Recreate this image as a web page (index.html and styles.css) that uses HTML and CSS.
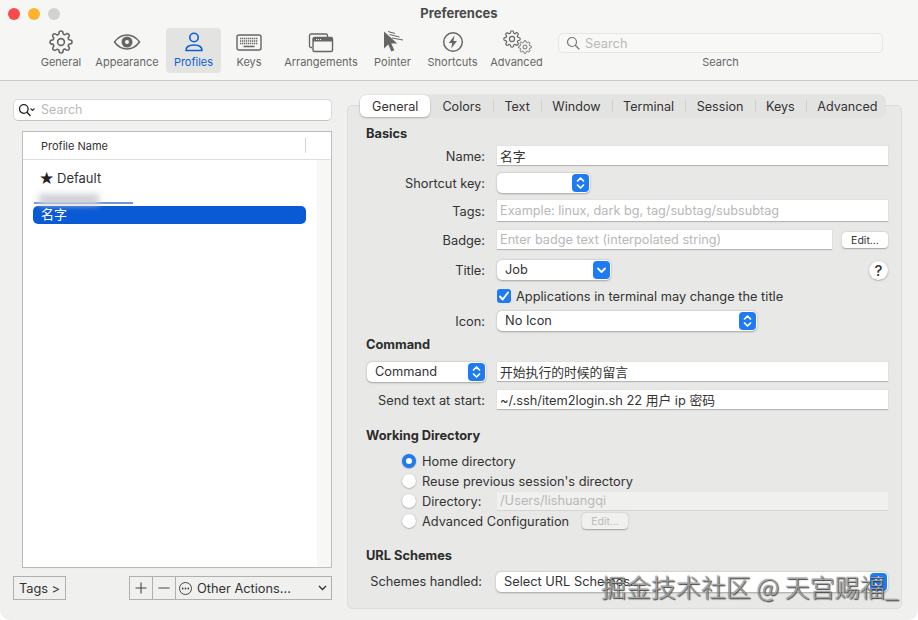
FILE: index.html
```html
<!DOCTYPE html>
<html lang="en">
<head>
<meta charset="utf-8">
<title>Preferences</title>
<link rel="stylesheet" href="styles.css">
</head>
<body>
<svg class="defs" width="0" height="0" aria-hidden="true">
  <symbol id="gear" viewBox="0 0 24 24">
    <circle cx="12" cy="12" r="3.4" fill="none" stroke="currentColor" stroke-width="1.6"/>
    <path fill="none" stroke="currentColor" stroke-width="1.6" d="M19.4 15a1.65 1.65 0 0 0 .33 1.82l.06.06a2 2 0 0 1 0 2.83 2 2 0 0 1-2.83 0l-.06-.06a1.65 1.65 0 0 0-1.82-.33 1.65 1.65 0 0 0-1 1.51V21a2 2 0 0 1-2 2 2 2 0 0 1-2-2v-.09A1.65 1.65 0 0 0 9 19.4a1.65 1.65 0 0 0-1.82.33l-.06.06a2 2 0 0 1-2.83 0 2 2 0 0 1 0-2.83l.06-.06a1.65 1.65 0 0 0 .33-1.82 1.65 1.65 0 0 0-1.51-1H3a2 2 0 0 1-2-2 2 2 0 0 1 2-2h.09A1.65 1.65 0 0 0 4.6 9a1.65 1.65 0 0 0-.33-1.82l-.06-.06a2 2 0 0 1 0-2.83 2 2 0 0 1 2.83 0l.06.06a1.65 1.65 0 0 0 1.82.33H9a1.65 1.65 0 0 0 1-1.51V3a2 2 0 0 1 2-2 2 2 0 0 1 2 2v.09a1.65 1.65 0 0 0 1 1.51 1.65 1.65 0 0 0 1.82-.33l.06-.06a2 2 0 0 1 2.83 0 2 2 0 0 1 0 2.83l-.06.06a1.65 1.65 0 0 0-.33 1.82V9a1.65 1.65 0 0 0 1.51 1H21a2 2 0 0 1 2 2 2 2 0 0 1-2 2h-.09a1.65 1.65 0 0 0-1.51 1z"/>
  </symbol>
  <symbol id="updown" viewBox="0 0 17 18">
    <path d="M5.5 7 8.5 4l3 3M5.5 11l3 3 3-3" fill="none" stroke="#fff" stroke-width="1.7" stroke-linecap="round" stroke-linejoin="round"/>
  </symbol>
  <symbol id="down" viewBox="0 0 17 18">
    <path d="M5 7.5l3.5 3.5L12 7.5" fill="none" stroke="#fff" stroke-width="1.8" stroke-linecap="round" stroke-linejoin="round"/>
  </symbol>
</svg>

<div class="window">
  <header class="titlebar">
    <div class="title-row">
      <div class="lights">
        <span class="light light-red"></span>
        <span class="light light-yellow"></span>
        <span class="light light-grey"></span>
      </div>
      <div class="title">Preferences</div>
    </div>
    <nav class="toolbar">
      <div class="tool w-general">
        <svg class="tool-icon" width="24" height="24"><use href="#gear"/></svg>
        <span>General</span>
      </div>
      <div class="tool w-appearance">
        <svg class="tool-icon" width="28" height="24" viewBox="0 0 28 24">
          <path d="M1.5 12C5 7.2 9 5 14 5s9 2.2 12.5 7C23 16.8 19 19 14 19S5 16.8 1.5 12z" fill="none" stroke="currentColor" stroke-width="1.5"/>
          <circle cx="14" cy="12" r="5.5" fill="currentColor"/>
          <circle cx="14" cy="12" r="2" fill="#f6f6f5"/>
        </svg>
        <span>Appearance</span>
      </div>
      <div class="tool w-profiles tool-active">
        <svg class="tool-icon" width="20" height="24" viewBox="0 0 20 24">
          <circle cx="10" cy="7.5" r="4.2" fill="none" stroke="currentColor" stroke-width="1.6"/>
          <path d="M2 20.5c0-3.5 3-5.5 8-5.5s8 2 8 5.5z" fill="none" stroke="currentColor" stroke-width="1.6" stroke-linejoin="round"/>
        </svg>
        <span>Profiles</span>
      </div>
      <div class="tool w-keys">
        <svg class="tool-icon" width="26" height="24" viewBox="0 0 26 24">
          <rect x="1" y="5" width="24" height="15" rx="2" fill="none" stroke="currentColor" stroke-width="1.4"/>
          <path d="M4 8.5h18M4 11h18M4 13.5h18" stroke="currentColor" stroke-width="1.4" stroke-dasharray="1.3 .7"/>
          <path d="M7.5 16.5h11" stroke="currentColor" stroke-width="1.5"/>
        </svg>
        <span>Keys</span>
      </div>
      <div class="tool w-arrangements">
        <svg class="tool-icon" width="26" height="24" viewBox="0 0 26 24">
          <path d="M4 17.5H3A1.5 1.5 0 0 1 1.5 16V5.5A1.5 1.5 0 0 1 3 4h15a1.5 1.5 0 0 1 1.5 1.5V7" fill="none" stroke="currentColor" stroke-width="1.3"/>
          <rect x="5" y="7.5" width="19.5" height="14" rx="1.5" fill="#f6f6f5" stroke="currentColor" stroke-width="1.4"/>
          <path d="M5 11.5V9a1.5 1.5 0 0 1 1.5-1.5h16.5A1.5 1.5 0 0 1 24.5 9v2.5z" fill="currentColor"/>
          <path d="M8 9.5h5" stroke="#f6f6f5" stroke-width="1" stroke-dasharray="1 1"/>
        </svg>
        <span>Arrangements</span>
      </div>
      <div class="tool w-pointer">
        <svg class="tool-icon" width="24" height="24" viewBox="0 0 24 24">
          <path d="M3 1.5v17l4.3-4 3 7 3-1.3-3-6.7h6z" fill="currentColor"/>
          <path d="M7 1.5l7 2M8.5 4.5l10 2.5M11 8l11 2" stroke="currentColor" stroke-width="1"/>
        </svg>
        <span>Pointer</span>
      </div>
      <div class="tool w-shortcuts">
        <svg class="tool-icon" width="24" height="24" viewBox="0 0 24 24">
          <circle cx="12" cy="12" r="9.3" fill="none" stroke="currentColor" stroke-width="1.5"/>
          <path d="M13.5 5.5 7.8 13h3.4l-1 5.5 5.8-7.5h-3.5z" fill="currentColor"/>
        </svg>
        <span>Shortcuts</span>
      </div>
      <div class="tool w-advanced">
        <div class="gears">
          <svg class="gear-big" width="18" height="18"><use href="#gear"/></svg>
          <svg class="gear-small" width="14" height="14"><use href="#gear"/></svg>
        </div>
        <span>Advanced</span>
      </div>
      <div class="tool-search">
        <div class="tool-search-box">
          <svg width="14" height="14" viewBox="0 0 14 14"><circle cx="6" cy="6" r="4.5" fill="none" stroke="#777" stroke-width="1.2"/><path d="M9.3 9.3 13 13" stroke="#777" stroke-width="1.3" stroke-linecap="round"/></svg>
          <span>Search</span>
        </div>
        <span class="tool-search-label">Search</span>
      </div>
    </nav>
  </header>

  <main class="content">
    <section class="left">
      <div class="filter">
        <svg width="18" height="14" viewBox="0 0 18 14"><circle cx="5.8" cy="6" r="4.3" fill="none" stroke="#222" stroke-width="1.3"/><path d="M9 9.2l3 3.3" stroke="#222" stroke-width="1.4" stroke-linecap="round"/><path d="M12.5 5.5l2 2 2-2" fill="none" stroke="#333" stroke-width="1.1"/></svg>
        <span class="filter-text">Search</span>
      </div>
      <div class="table">
        <div class="table-head"><span class="head-label">Profile Name</span></div>
        <div class="table-body">
          <div class="list">
            <div class="row-default"><span class="star">★</span><span>Default</span></div>
            <div class="ghost"><div class="ghost-line"></div><div class="ghost-blob"></div></div>
            <div class="row-selected">名字</div>
          </div>
          <div class="gutter"></div>
        </div>
      </div>
      <div class="bottom-bar">
        <div class="sq-btn tags-btn">Tags &gt;</div>
        <div class="btn-group">
          <div class="sq-btn plus">
            <svg width="12" height="12" viewBox="0 0 12 12"><path d="M6 .5v11M.5 6h11" stroke="#444" stroke-width="1.1"/></svg>
          </div>
          <div class="sq-btn minus">
            <svg width="12" height="12" viewBox="0 0 12 12"><path d="M.5 6h11" stroke="#444" stroke-width="1.1"/></svg>
          </div>
          <div class="sq-btn other">
            <svg width="15" height="15" viewBox="0 0 15 15"><circle cx="7.5" cy="7.5" r="6" fill="none" stroke="#444" stroke-width="1"/><circle cx="4.7" cy="7.5" r=".9" fill="#444"/><circle cx="7.5" cy="7.5" r=".9" fill="#444"/><circle cx="10.3" cy="7.5" r=".9" fill="#444"/></svg>
            <span class="other-label">Other Actions...</span>
            <svg width="9" height="6" viewBox="0 0 9 6"><path d="M1 1l3.5 3.5L8 1" fill="none" stroke="#333" stroke-width="1.4"/></svg>
          </div>
        </div>
      </div>
    </section>

    <section class="right">
      <div class="tabs">
        <div class="tab tab-on">General</div>
        <div class="tab tab-plain">Colors</div>
        <div class="tab tab-sep">Text</div>
        <div class="tab tab-sep">Window</div>
        <div class="tab tab-sep">Terminal</div>
        <div class="tab tab-sep">Session</div>
        <div class="tab tab-sep">Keys</div>
        <div class="tab tab-sep">Advanced</div>
      </div>
      <div class="panel">
        <h3 class="heading">Basics</h3>
        <div class="row m5"><label class="lbl">Name:</label><div class="field">名字</div></div>
        <div class="row m7"><label class="lbl">Shortcut key:</label><div class="popup p-shortcut"><span></span><svg class="arrow" width="17" height="18"><use href="#updown"/></svg></div></div>
        <div class="row m7 tall"><label class="lbl">Tags:</label><div class="field ph">Example: linux, dark bg, tag/subtag/subsubtag</div></div>
        <div class="row m8"><label class="lbl">Badge:</label><div class="field ph">Enter badge text (interpolated string)</div><div class="edit edit-badge">Edit...</div></div>
        <div class="row m10"><label class="lbl">Title:</label><div class="popup p-title"><span>Job</span><svg class="arrow" width="17" height="18"><use href="#down"/></svg></div><div class="help">?</div></div>
        <div class="row m8 short"><span class="lbl"></span>
          <span class="check"><svg width="14" height="14" viewBox="0 0 14 14"><path d="M3 7.5l2.7 3L11 3.5" fill="none" stroke="#fff" stroke-width="1.9" stroke-linecap="round" stroke-linejoin="round"/></svg></span>
          <span class="check-label">Applications in terminal may change the title</span>
        </div>
        <div class="row m7"><label class="lbl">Icon:</label><div class="popup p-icon"><span>No Icon</span><svg class="arrow" width="17" height="18"><use href="#updown"/></svg></div></div>

        <h3 class="heading m5">Command</h3>
        <div class="row m10"><div class="popup p-command"><span>Command</span><svg class="arrow" width="17" height="18"><use href="#updown"/></svg></div><div class="field">开始执行的时候的留言</div></div>
        <div class="row m8"><label class="lbl">Send text at start:</label><div class="field">~/.ssh/item2login.sh 22 用户 ip 密码</div></div>

        <h3 class="heading m17">Working Directory</h3>
        <div class="radios">
          <div class="radio-row"><span class="radio radio-on"></span><span>Home directory</span></div>
          <div class="radio-row"><span class="radio"></span><span>Reuse previous session's directory</span></div>
          <div class="radio-row"><span class="radio"></span><span class="dir-label">Directory:</span><div class="field field-off">/Users/lishuangqi</div></div>
          <div class="radio-row"><span class="radio"></span><span>Advanced Configuration</span><div class="edit edit-off">Edit...</div></div>
        </div>

        <h3 class="heading m16">URL Schemes</h3>
        <div class="row m9"><label class="lbl lbl-schemes">Schemes handled:</label><div class="popup p-schemes"><span>Select URL Schemes...</span><svg class="arrow" width="17" height="18"><use href="#updown"/></svg></div></div>
      </div>
    </section>
  </main>
  <div class="watermark">掘金技术社区 @ 天宫赐福_</div>
</div>
</body>
</html>
```
FILE: styles.css
```css
* { box-sizing: border-box; }
html, body { margin: 0; padding: 0; background: #fff; }
body { font-family: Inter, "Noto Sans CJK SC", sans-serif; font-size: 12.8px; color: #333; width: 918px; height: 620px; overflow: hidden; }
.defs { position: absolute; }

.window { position: relative; width: 918px; height: 620px; display: flex; flex-direction: column; background: #f0f0ef; border-radius: 0 0 10px 10px; overflow: hidden; }

.titlebar { height: 81px; flex: none; background: #f6f6f5; border-bottom: 1px solid #c9c9c8; }
.title-row { height: 28px; padding-bottom: 2px; display: flex; align-items: center; position: relative; justify-content: center; }
.lights { position: absolute; left: 8px; top: 8px; display: flex; gap: 8px; }
.light { width: 12px; height: 12px; border-radius: 50%; }
.light-red { background: #fb4a4b; }
.light-yellow { background: #fdb32e; }
.light-grey { background: #d2d2d1; }
.title { font-size: 13px; font-weight: 700; color: #4a4a4a; }

.toolbar { display: flex; padding-left: 35px; height: 45px; }
.tool { display: flex; flex-direction: column; align-items: center; justify-content: flex-end; font-size: 11px; color: #666; border-radius: 4px; padding-bottom: 4px; height: 45px; }
.tool-icon { margin-bottom: 1px; flex: none; }
.tool svg { color: #666; }
.w-general { width: 52px; }
.w-appearance { width: 79px; padding-left: 1px; }
.w-profiles { width: 55px; }
.w-keys { width: 56px; }
.w-arrangements { width: 88px; }
.w-pointer { width: 55px; }
.w-shortcuts { width: 65px; }
.w-advanced { width: 63px; }
.tool-active { background: #e3e3e2; color: #0b5fd8; }
.tool-active svg { color: #0b5fd8; }
.gears { position: relative; width: 28px; height: 26px; flex: none; }
.gear-big { position: absolute; left: 0; top: 1px; }
.gear-small { position: absolute; left: 15px; top: 11px; }
.tool-search { margin-left: 10px; width: 325px; display: flex; flex-direction: column; align-items: center; }
.tool-search-box { width: 100%; height: 20px; margin-top: 5px; background: #f8f8f7; border: 1px solid #e6e6e5; border-radius: 5px; display: flex; align-items: center; gap: 5px; padding-left: 7px; color: #b9b9b9; font-size: 12.8px; }
.tool-search-label { font-size: 11px; color: #666; margin-top: 2px; }

.content { flex: 1; display: flex; gap: 15px; padding: 14px 16px 11px 13px; min-height: 0; }

.left { width: 319px; padding-top: 4px; display: flex; flex-direction: column; }
.filter { height: 22px; background: #fff; border: 1px solid #d9d9d8; border-bottom-color: #c4c4c3; border-radius: 5px; display: flex; align-items: center; gap: 5px; padding-left: 4px; color: #b9b9b9; font-size: 12.5px; flex: none; }
.filter-text { margin-top: -2px; }
.table { margin: 10px 0 0 9px; height: 437px; flex: none; background: #fff; border: 1px solid #bdbdbc; display: flex; flex-direction: column; }
.table-head { height: 28px; flex: none; border-bottom: 1px solid #dededd; display: flex; align-items: center; padding-left: 18px; font-size: 11px; color: #333; position: relative; }
.head-label { flex: 1; }
.table-head::after { content: ""; width: 1px; height: 15px; background: #d4d4d3; margin-right: 25px; }
.table-body { flex: 1; display: flex; min-height: 0; }
.list { flex: 1; box-shadow: 1px 0 3px rgba(0,0,0,.07); padding-right: 11px; }
.gutter { width: 14px; flex: none; background: #f7f7f6; }
.row-default { height: 36px; display: flex; align-items: center; padding-left: 17px; gap: 4px; color: #333; font-size: 13px; }
.star { font-size: 17px; width: 13px; line-height: 16px; font-family: "DejaVu Sans", sans-serif; color: #222; display: flex; justify-content: center; }
.ghost { height: 10px; position: relative; margin-left: 11px; }
.ghost-line { position: absolute; left: 0; top: 6px; width: 99px; height: 1.5px; background: #6f95dc; }
.ghost-blob { position: absolute; left: 5px; top: -2px; width: 60px; height: 11px; background: #cfcfd6; filter: blur(3px); }
.row-selected { height: 18px; margin-left: 10px; background: #0a5ad6; color: #fff; border-radius: 5px; display: flex; align-items: center; padding: 0 0 3px 8px; font-size: 13px; font-family: "Noto Sans CJK SC", sans-serif; }

.bottom-bar { display: flex; justify-content: space-between; margin-top: 8px; height: 24px; flex: none; }
.sq-btn { height: 24px; border: 1px solid #b0b0af; background: #f0f0ef; display: flex; align-items: center; justify-content: center; color: #333; font-size: 12.8px; }
.tags-btn { width: 53px; }
.btn-group { display: flex; }
.plus { width: 24px; }
.minus { width: 23px; border-left: 0; }
.other { width: 156px; border-left: 0; padding: 0 4px 0 2px; justify-content: flex-start; gap: 4px; }
.other-label { flex: 1; }

.right { flex: 1; display: flex; flex-direction: column; position: relative; }
.tabs { align-self: flex-start; margin-left: 13px; height: 22px; flex: none; display: flex; background: #e3e3e2; border-radius: 6px; position: relative; z-index: 1; width: 525px; box-shadow: 0 0 0 .5px #dcdcdb; }
.tab { padding: 0 12px; display: flex; align-items: center; color: #333; font-size: 12.6px; position: relative; height: 22px; }
.tab-on { background: #fff; border-radius: 6px; box-shadow: 0 1px 2px rgba(0,0,0,.25); }
.tab-sep { padding: 0 11.25px; }
.tab-sep::before { content: ""; position: absolute; left: 0; top: 5px; height: 12px; width: 1px; background: #cfcfce; }

.panel { flex: 1; margin-top: -12px; background: #e8e8e7; border: 1px solid #dcdcdb; border-radius: 5px; padding: 19px 0 0 18px; min-height: 0; }
.heading { margin: 0; height: 16px; line-height: 18px; font-size: 12.8px; font-weight: 700; color: #2c2c2c; }
.m5 { margin-top: 5px; }
.m7 { margin-top: 7px; }
.m8 { margin-top: 8px; }
.m9 { margin-top: 9px; }
.m10 { margin-top: 10px; }
.m16 { margin-top: 16px; }
.m17 { margin-top: 17px; }

.row { display: flex; align-items: center; height: 20px; gap: 12px; width: 522px; }
.tall { height: 22px; }
.short { height: 16px; }
.lbl { width: 119px; flex: none; text-align: right; color: #333; }
.lbl-schemes { padding-right: 3px; margin-top: -2px; }
.field { flex: 1; align-self: stretch; background: #fff; border-bottom: 1px solid #b5b5b4; box-shadow: 0 0 0 .5px #dadad9; display: flex; align-items: center; padding-left: 3px; color: #333; font-size: 12.8px; }
.ph { color: #b8b8b8; font-size: 12.7px; }

.popup { height: 20px; background: #fff; border-radius: 5px; box-shadow: 0 .5px 2px rgba(0,0,0,.3); display: flex; align-items: center; justify-content: space-between; padding: 0 1px 0 8px; color: #333; flex: none; }
.popup span { margin-top: -2px; }
.arrow { background: #1f7bf2; border-radius: 4px; flex: none; }
.p-shortcut { width: 93px; }
.p-title { width: 114px; }
.p-icon { width: 260px; }
.p-command { width: 119px; margin-left: 1px; margin-right: -1px; }
.p-schemes { width: 392px; margin-left: -1px; }

.edit { width: 46px; height: 16px; background: #fff; border-radius: 4px; box-shadow: 0 .5px 1.5px rgba(0,0,0,.3); display: flex; align-items: center; justify-content: center; font-size: 10.5px; color: #333; flex: none; }
.edit-badge { margin-left: -2px; }
.edit-off { margin-left: 7px; background: #f0f0ef; color: #bbb; }
.help { margin-left: auto; width: 19px; height: 19px; background: #fff; border-radius: 50%; box-shadow: 0 .5px 2px rgba(0,0,0,.35); display: flex; align-items: center; justify-content: center; font-size: 15px; font-weight: 500; color: #333; flex: none; }

.check { width: 14px; height: 14px; background: #1f7bf2; border-radius: 3px; flex: none; margin-right: -7px; display: flex; }
.check-label { color: #333; }

.radios { margin: 8px 0 0 36px; display: flex; flex-direction: column; width: 486px; }
.radio-row { height: 20px; display: flex; align-items: center; gap: 6px; color: #333; }
.radio { width: 14px; height: 14px; border-radius: 50%; background: #fff; box-shadow: 0 .5px 1.5px rgba(0,0,0,.4); flex: none; }
.radio-on { background: #fff; border: 4px solid #1f7bf2; }
.dir-label { width: 69px; flex: none; }
.field-off { background: #f0f0ef; color: #b8b8b8; box-shadow: none; border-bottom-color: #d4d4d3; height: 19px; align-self: center; }

.watermark { position: absolute; left: 601px; top: 569px; font-family: "Noto Sans CJK SC", sans-serif; font-weight: 300; font-size: 25px; line-height: 34px; white-space: nowrap; color: rgba(255,255,255,.55); text-shadow: 0 0 1px #222, 1px 1px 1px #444; }
```
